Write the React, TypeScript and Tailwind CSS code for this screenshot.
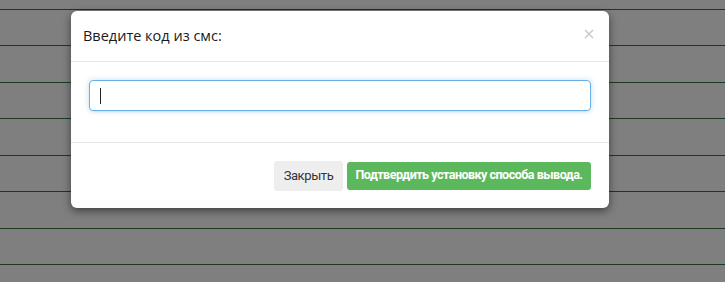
import React from "react";

export default function App() {
  const rows = [35, 36, 35, 36, 35, 36, 35, 36];
  return (
    <div className="relative w-[725px] h-[282px] overflow-hidden bg-[#7f7f7f]" style={{ fontFamily: "'Open Sans', sans-serif" }}>
      <div className="flex flex-col">
        <div className="h-[9px]" />
        {rows.map((h, i) => (
          <div key={i} className="border-t border-[#1c3a1c]" style={{ height: h + 1 }} />
        ))}
      </div>
      <div className="absolute left-[71px] top-[11px] w-[538px] rounded-[6px] bg-white shadow-[0_3px_9px_rgba(0,0,0,0.5)] flex flex-col">
        <div className="h-[51px] border-b border-[#e5e5e5] flex items-center justify-between pl-[12px] pr-[14px]">
          <span className="text-[14.5px] text-[#1a1a1a] leading-5 -mt-[1px]">Введите код из смс:</span>
          <svg width="10" height="10" viewBox="0 0 10 10" className="mr-[1px] -mt-[4px]">
            <path d="M1 1 L9 9 M9 1 L1 9" stroke="#cccccc" strokeWidth="1.6" />
          </svg>
        </div>
        <div className="h-[81px] px-[18px] pt-[18px] border-b border-[#e5e5e5]">
          <div className="h-[31px] w-full rounded-[4px] border border-[#66afe9] shadow-[0_1px_2px_rgba(0,0,0,0.08),0_0_6px_rgba(102,175,233,0.35)] flex items-center pl-[10px]">
            <div className="w-[1px] h-[16px] bg-[#222]" />
          </div>
        </div>
        <div className="h-[65px] flex items-center justify-end gap-[4px] pr-[18px]" style={{ fontFamily: "Roboto, sans-serif" }}>
          <button className="h-[30px] w-[69px] rounded-[3px] bg-[#eeeeee] text-[13px] tracking-[-0.4px] text-[#333] flex items-center justify-center whitespace-nowrap">Закрыть</button>
          <button className="h-[28px] w-[244px] rounded-[3px] bg-[#5cb85c] text-[12.5px] tracking-[-0.5px] font-bold text-white flex items-center justify-center whitespace-nowrap">Подтвердить установку способа вывода.</button>
        </div>
      </div>
    </div>
  );
}
